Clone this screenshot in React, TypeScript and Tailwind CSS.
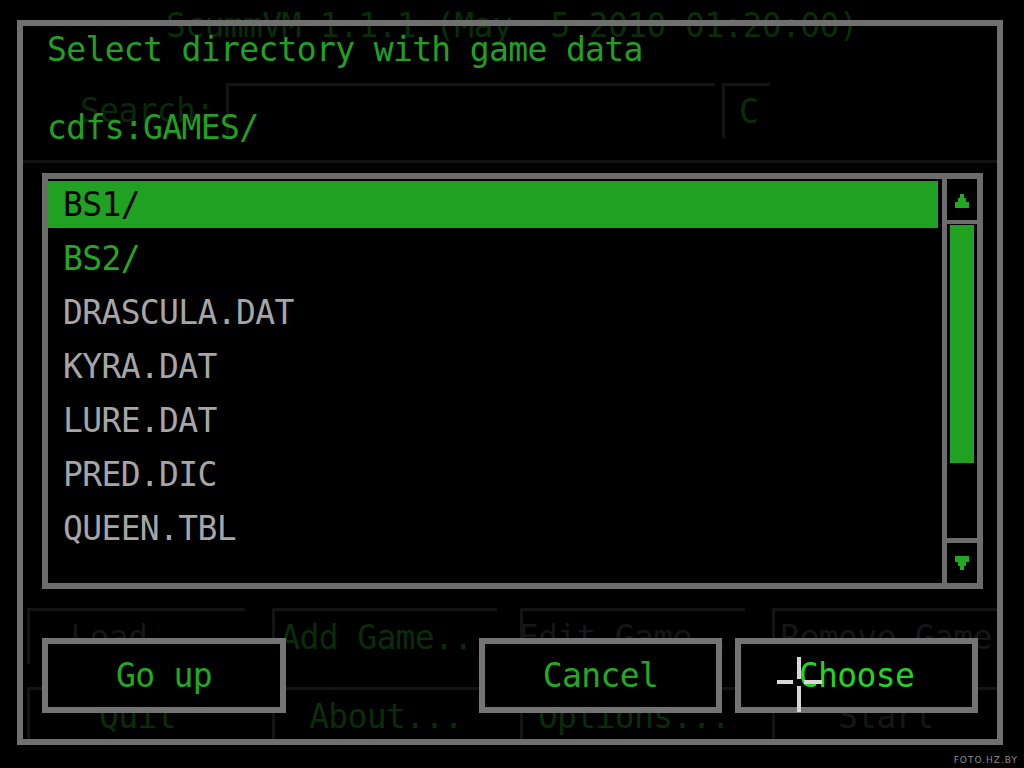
import React from "react";

const mono = "font-['DejaVu_Sans_Mono','Liberation_Mono',monospace]";

function UpArrow() {
  return (
    <svg width="14" height="16" viewBox="0 0 14 16">
      <path d="M5 1H9V5H11V9H14V15H0V9H3V5H5Z" fill="#22a822" />
    </svg>
  );
}
function DownArrow() {
  return (
    <svg width="14" height="16" viewBox="0 0 14 16">
      <path d="M0 1H14V7H11V11H9V15H5V11H3V7H0Z" fill="#22a822" />
    </svg>
  );
}

function GhostButton({ label, green, className }: { label: string; green?: boolean; className?: string }) {
  return (
    <div
      className={`h-[56px] border-t-[3px] border-l-[3px] border-[#141414] flex items-center justify-center whitespace-nowrap text-[33px] tracking-[-0.65px] ${
        green ? "text-[#0b2c0b]" : "text-[#161616]"
      } ${className ?? ""}`}
    >
      {label}
    </div>
  );
}

function Button({ label, bright, className }: { label: string; bright?: boolean; className?: string }) {
  return (
    <div
      className={`h-[75px] border-[6px] border-[#747474] bg-black flex items-center justify-center text-[33px] tracking-[-0.65px] leading-none ${
        bright ? "text-[#24d424]" : "text-[#22aa22]"
      } ${className ?? ""}`}
    >
      {label}
    </div>
  );
}

const rows = ["BS1/", "BS2/", "DRASCULA.DAT", "KYRA.DAT", "LURE.DAT", "PRED.DIC", "QUEEN.TBL"];

export default function App() {
  return (
    <div className={`relative w-[1024px] h-[768px] bg-black overflow-hidden ${mono}`}>
      {/* underlying launcher (dimmed) */}
      <div className="flex flex-col w-full h-full">
        <div className="pt-[9px] h-[42px] text-center text-[33px] leading-[33px] tracking-[-0.65px] text-[#0b2c0b] whitespace-pre">
          {"ScummVM 1.1.1 (May  5 2010 01:20:00)"}
        </div>
        <div className="mt-[41px] flex items-center h-[55px]">
          <div className="ml-[80px] w-[146px] text-[33px] tracking-[-0.65px] text-[#0a280a]">Search:</div>
          <div className="w-[489px] h-[55px] border-t-[3px] border-l-[3px] border-[#141414]" />
          <div className="ml-[7px] w-[48px] h-[55px] border-t-[3px] border-l-[3px] border-[#141414] flex items-center pl-[14px] text-[33px] text-[#0b2c0b]">
            C
          </div>
        </div>
        <div className="mt-[22px] ml-[17px] w-[980px] h-[3px] bg-[#111111]" />
        <div className="mt-[445px] flex">
          <GhostButton label="Load..." className="ml-[27px] w-[218px]" />
          <GhostButton label="Add Game..." green className="ml-[27px] w-[225px]" />
          <GhostButton label="Edit Game..." className="ml-[23px] w-[225px]" />
          <GhostButton label="Remove Game" className="ml-[27px] w-[225px]" />
        </div>
        <div className="mt-[23px] flex">
          <GhostButton label="Quit" green className="ml-[27px] w-[218px]" />
          <GhostButton label="About..." green className="ml-[27px] w-[225px]" />
          <GhostButton label="Options..." green className="ml-[23px] w-[225px]" />
          <GhostButton label="Start" className="ml-[27px] w-[225px]" />
        </div>
      </div>

      {/* dialog overlay */}
      <div className="absolute left-[17px] top-[20px] w-[986px] h-[725px] border-[6px] border-[#707070] flex flex-col">
        <div className="pt-[7px] pl-[24px] h-[40px] text-[33px] leading-[33px] tracking-[-0.65px] text-[#22a022]">
          Select directory with game data
        </div>
        <div className="mt-[45px] pl-[24px] h-[33px] text-[33px] leading-[33px] tracking-[-0.65px] text-[#22a022]">
          cdfs:GAMES/
        </div>
        <div className="mt-[29px] ml-[19px] mr-[14px] h-[416px] border-[6px] border-[#6c6c6c] bg-black flex">
          <div className="flex-1 pt-[2px] pr-[4px] flex flex-col">
            {rows.map((r, i) => (
              <div key={r} className="h-[54px]">
                <div
                  className={`h-[47px] flex items-center pl-[15px] text-[33px] tracking-[-0.65px] ${
                    i === 0 ? "bg-[#21a121] text-black" : i === 1 ? "text-[#22a822]" : "text-[#a6a6a6]"
                  }`}
                >
                  {r}
                </div>
              </div>
            ))}
          </div>
          <div className="w-[5px] bg-[#6c6c6c]" />
          <div className="w-[30px] flex flex-col">
            <div className="h-[41px] pt-[2px] flex items-center justify-center">
              <UpArrow />
            </div>
            <div className="h-[4px] bg-[#6c6c6c]" />
            <div className="flex-1 pt-[1px] px-[3px]">
              <div className="h-[238px] bg-[#21a121]" />
            </div>
            <div className="h-[5px] bg-[#6c6c6c]" />
            <div className="h-[40px] flex items-center justify-center">
              <DownArrow />
            </div>
          </div>
        </div>
        <div className="mt-[49px] flex">
          <Button label="Go up" className="ml-[19px] w-[244px]" />
          <Button label="Cancel" className="ml-[193px] w-[243px]" />
          <Button label="Choose" bright className="ml-[13px] w-[243px]" />
        </div>
      </div>

      {/* mouse cursor */}
      <div className="absolute left-[797px] top-[657px] w-[4px] h-[22px] bg-[#d8d8d8]" />
      <div className="absolute left-[797px] top-[686px] w-[4px] h-[26px] bg-[#d8d8d8]" />
      <div className="absolute left-[777px] top-[680px] w-[16px] h-[4px] bg-[#d8d8d8]" />
      <div className="absolute left-[804px] top-[680px] w-[18px] h-[4px] bg-[#d8d8d8]" />

      {/* watermark */}
      <div className="absolute right-[6px] bottom-[3px] text-[9px] leading-[10px] tracking-[1px] text-[#8c8c8c] font-['DejaVu_Sans',sans-serif]">
        FOTO.HZ.BY
      </div>
    </div>
  );
}
